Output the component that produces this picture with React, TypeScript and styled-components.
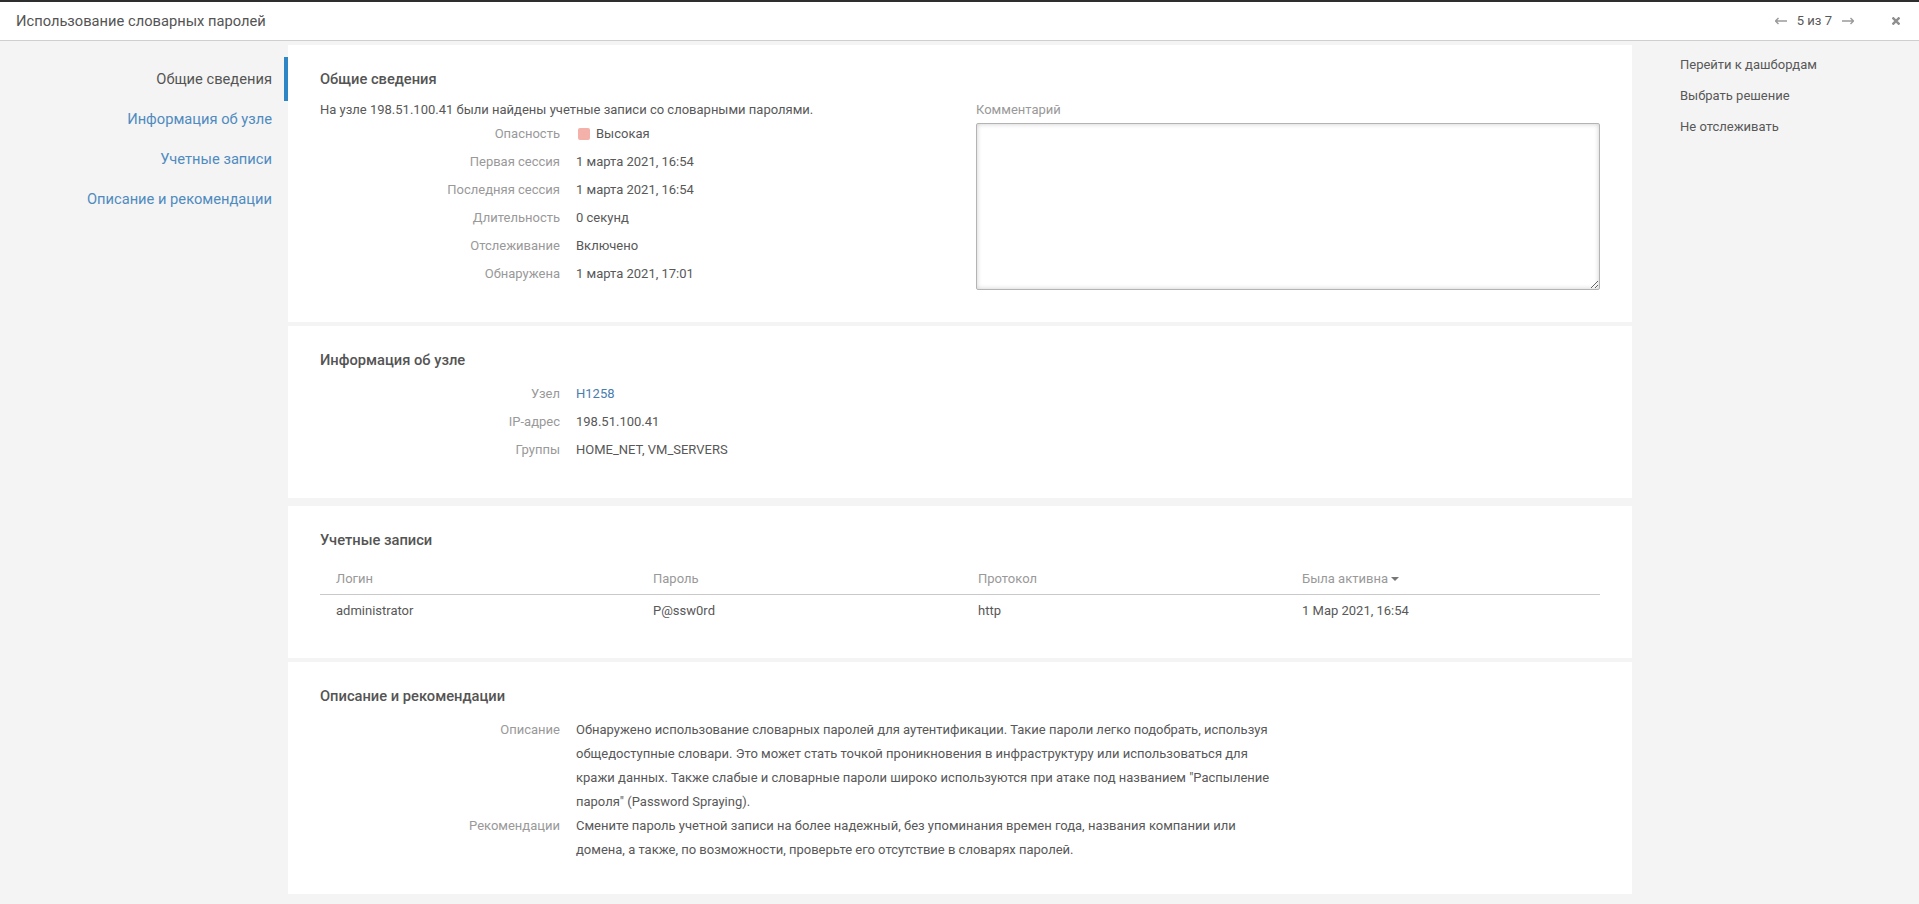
import React from "react";
import styled, { createGlobalStyle } from "styled-components";

const Global = createGlobalStyle`
  html, body { margin: 0; padding: 0; height: 100%; background: #f4f4f4; }
  body { font-family: Roboto, "Liberation Sans", sans-serif; font-size: 13px; color: #585858; overflow: hidden; }
  * { box-sizing: border-box; }
`;

const Page = styled.div`
  display: flex;
  flex-direction: column;
  height: 904px;
`;

const Header = styled.header`
  height: 41px;
  flex: none;
  display: flex;
  align-items: center;
  padding: 0 19px 0 16px;
  background: #fff;
  border-top: 2px solid #2e2e2e;
  border-bottom: 1px solid #cfcfcf;
`;

const HeaderTitle = styled.h1`
  margin: 0;
  flex: 1;
  font-size: 14.7px;
  font-weight: 400;
  line-height: 20px;
  color: #545454;
`;

const Pager = styled.div`
  display: flex;
  align-items: center;
  gap: 10px;
  margin-right: 38px;
  line-height: 20px;
`;

const PagerIcon = styled.svg`
  display: block;
  width: 12px;
  height: 8px;
  fill: none;
  stroke: #9a9a9a;
  stroke-width: 1.4;
`;

const CloseIcon = styled.svg`
  display: block;
  width: 8px;
  height: 8px;
  stroke: #8f8f8f;
  stroke-width: 2.4;
`;

const Main = styled.div`
  flex: 1;
  display: flex;
  padding-top: 4px;
  min-height: 0;
`;

const Nav = styled.nav`
  width: 288px;
  flex: none;
  padding-top: 14px;
  display: flex;
  flex-direction: column;
`;

const NavItem = styled.a<{ $active?: boolean }>`
  position: relative;
  display: block;
  height: 40px;
  line-height: 40px;
  padding-right: 16px;
  text-align: right;
  font-size: 14.7px;
  color: ${(p) => (p.$active ? "#545454" : "#4f8bbf")};

  ${(p) =>
    p.$active &&
    `&::after {
      content: "";
      position: absolute;
      top: -2px;
      bottom: -2px;
      right: 0;
      width: 4px;
      background: #2f86c4;
    }`}
`;

const Content = styled.main`
  width: 1344px;
  flex: none;
  display: flex;
  flex-direction: column;
`;

const Panel = styled.section<{ $height: number; $gap: number }>`
  height: ${(p) => p.$height}px;
  flex: none;
  margin-bottom: ${(p) => p.$gap}px;
  padding: 24px 32px 0;
  background: #fff;
`;

const PanelTitle = styled.h2<{ $space: number }>`
  margin: 0 0 ${(p) => p.$space}px;
  font-size: 14.7px;
  font-weight: 500;
  line-height: 20px;
  color: #545454;
`;

const Columns = styled.div`
  display: grid;
  grid-template-columns: 656px 624px;
`;

const Summary = styled.p`
  margin: 0;
  line-height: 20px;
`;

const FieldRow = styled.div`
  display: grid;
  grid-template-columns: 240px 1fr;
  column-gap: 16px;
  line-height: 28px;
`;

const Label = styled.div`
  text-align: right;
  color: #999;
`;

const Value = styled.div`
  display: flex;
  align-items: center;
`;

const Swatch = styled.span`
  width: 12px;
  height: 12px;
  margin: 0 6px 0 2px;
  border-radius: 2px;
  background: #f3b1a9;
`;

const NodeLink = styled.a`
  color: #4a7dae;
`;

const CommentLabel = styled.label`
  display: block;
  height: 23px;
  line-height: 20px;
  color: #999;
`;

const CommentBox = styled.textarea`
  display: block;
  width: 624px;
  height: 167px;
  padding: 6px;
  border: 1px solid #b4b4b4;
  border-radius: 2px;
  outline: none;
  resize: both;
  background: #fff;
  box-shadow: inset 0 0 5px rgba(0, 0, 0, 0.2);
`;

const TableGrid = styled.div`
  display: grid;
  grid-template-columns: 317px 325px 324px 314px;
`;

const HeadCell = styled.div`
  height: 34px;
  padding-left: 16px;
  padding-top: 8px;
  line-height: 20px;
  color: #999;
  border-bottom: 1px solid #c9c9c9;
  display: flex;
  align-items: flex-start;
`;

const SortCaret = styled.span`
  width: 0;
  height: 0;
  margin: 8px 0 0 3px;
  border-left: 4px solid transparent;
  border-right: 4px solid transparent;
  border-top: 4px solid #777;
`;

const BodyCell = styled.div`
  height: 32px;
  padding-left: 16px;
  line-height: 32px;
`;

const TextRow = styled.div`
  display: grid;
  grid-template-columns: 240px 696px;
  column-gap: 16px;
  line-height: 24px;
`;

const Aside = styled.aside`
  flex: none;
  padding: 4px 0 0 48px;
  display: flex;
  flex-direction: column;
`;

const ActionItem = styled.a`
  display: block;
  height: 31px;
  line-height: 31px;
  color: #585858;
`;

const generalFields: [string, string][] = [
  ["Первая сессия", "1 марта 2021, 16:54"],
  ["Последняя сессия", "1 марта 2021, 16:54"],
  ["Длительность", "0 секунд"],
  ["Отслеживание", "Включено"],
  ["Обнаружена", "1 марта 2021, 17:01"],
];

export default function App() {
  return (
    <Page>
      <Global />
      <Header>
        <HeaderTitle>Использование словарных паролей</HeaderTitle>
        <Pager>
          <PagerIcon viewBox="0 0 12 8">
            <path d="M12 4H0.5M3.5 1l-3 3 3 3" />
          </PagerIcon>
          <span>5 из 7</span>
          <PagerIcon viewBox="0 0 12 8">
            <path d="M0 4h11.5M8.5 1l3 3-3 3" />
          </PagerIcon>
        </Pager>
        <CloseIcon viewBox="0 0 8 8">
          <path d="M0.5 0.5l7 7M7.5 0.5l-7 7" />
        </CloseIcon>
      </Header>
      <Main>
        <Nav>
          <NavItem $active>Общие сведения</NavItem>
          <NavItem>Информация об узле</NavItem>
          <NavItem>Учетные записи</NavItem>
          <NavItem>Описание и рекомендации</NavItem>
        </Nav>
        <Content>
          <Panel $height={277} $gap={4}>
            <PanelTitle $space={11}>Общие сведения</PanelTitle>
            <Columns>
              <div>
                <Summary>На узле 198.51.100.41 были найдены учетные записи со словарными паролями.</Summary>
                <FieldRow>
                  <Label>Опасность</Label>
                  <Value>
                    <Swatch />
                    Высокая
                  </Value>
                </FieldRow>
                {generalFields.map(([label, value]) => (
                  <FieldRow key={label}>
                    <Label>{label}</Label>
                    <Value>{value}</Value>
                  </FieldRow>
                ))}
              </div>
              <div>
                <CommentLabel>Комментарий</CommentLabel>
                <CommentBox />
              </div>
            </Columns>
          </Panel>
          <Panel $height={172} $gap={8}>
            <PanelTitle $space={10}>Информация об узле</PanelTitle>
            <FieldRow>
              <Label>Узел</Label>
              <Value>
                <NodeLink>H1258</NodeLink>
              </Value>
            </FieldRow>
            <FieldRow>
              <Label>IP-адрес</Label>
              <Value>198.51.100.41</Value>
            </FieldRow>
            <FieldRow>
              <Label>Группы</Label>
              <Value>HOME_NET, VM_SERVERS</Value>
            </FieldRow>
          </Panel>
          <Panel $height={152} $gap={4}>
            <PanelTitle $space={11}>Учетные записи</PanelTitle>
            <TableGrid>
              <HeadCell>Логин</HeadCell>
              <HeadCell>Пароль</HeadCell>
              <HeadCell>Протокол</HeadCell>
              <HeadCell>
                Была активна
                <SortCaret />
              </HeadCell>
              <BodyCell>administrator</BodyCell>
              <BodyCell>P@ssw0rd</BodyCell>
              <BodyCell>http</BodyCell>
              <BodyCell>1 Мар 2021, 16:54</BodyCell>
            </TableGrid>
          </Panel>
          <Panel $height={232} $gap={0}>
            <PanelTitle $space={12}>Описание и рекомендации</PanelTitle>
            <TextRow>
              <Label>Описание</Label>
              <div>
                Обнаружено использование словарных паролей для аутентификации. Такие пароли легко подобрать, используя
                общедоступные словари. Это может стать точкой проникновения в инфраструктуру или использоваться для
                кражи данных. Также слабые и словарные пароли широко используются при атаке под названием "Распыление
                пароля" (Password Spraying).
              </div>
            </TextRow>
            <TextRow>
              <Label>Рекомендации</Label>
              <div>
                Смените пароль учетной записи на более надежный, без упоминания времен года, названия компании или
                домена, а также, по возможности, проверьте его отсутствие в словарях паролей.
              </div>
            </TextRow>
          </Panel>
        </Content>
        <Aside>
          <ActionItem>Перейти к дашбордам</ActionItem>
          <ActionItem>Выбрать решение</ActionItem>
          <ActionItem>Не отслеживать</ActionItem>
        </Aside>
      </Main>
    </Page>
  );
}
